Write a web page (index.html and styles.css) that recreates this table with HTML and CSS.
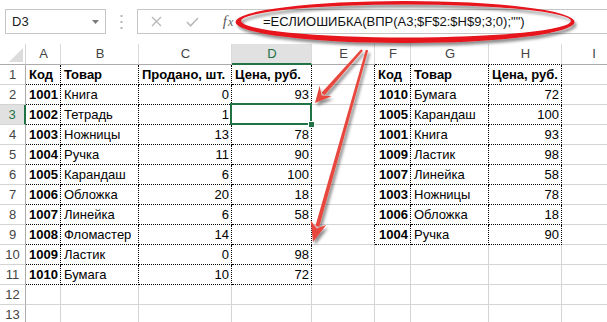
FILE: index.html
```html
<!DOCTYPE html>
<html lang="ru">
<head>
<meta charset="utf-8">
<link rel="stylesheet" href="styles.css">
</head>
<body>
<div class="app">
  <div class="toolbar">
    <div class="namebox"><span>D3</span><svg class="dd" width="7" height="4" viewBox="0 0 7 4"><polygon points="0,0 7,0 3.5,4" fill="#7a7a7a"/></svg></div>
    <div class="dots"><svg width="3" height="14" viewBox="0 0 3 14"><rect x="0.5" y="0" width="2" height="2" fill="#b5b5b5"/><rect x="0.5" y="6" width="2" height="2" fill="#b5b5b5"/><rect x="0.5" y="12" width="2" height="2" fill="#b5b5b5"/></svg></div>
    <div class="fbar">
      <span class="fbtn"><svg width="11" height="11" viewBox="0 0 11 11"><path d="M1 1 L10 10 M10 1 L1 10" stroke="#b9b9b9" stroke-width="1.4" fill="none"/></svg></span>
      <span class="fbtn"><svg width="13" height="10" viewBox="0 0 13 10"><path d="M1 5 L4.5 8.8 L12 1" stroke="#b9b9b9" stroke-width="1.6" fill="none"/></svg></span>
      <span class="fbtn fx"><i>f</i><i class="sx">x</i></span>
      <span class="ftext">=ЕСЛИОШИБКА(ВПР(A3;$F$2:$H$9;3;0);"")</span>
    </div>
  </div>
  <div class="sheet">
    <div class="c corner"><svg width="14" height="14" viewBox="0 0 14 14"><polygon points="14,0 14,14 0,14" fill="#dcdcdc"/></svg></div>
    <div class="c h">A</div><div class="c h">B</div><div class="c h">C</div><div class="c h selcol">D</div><div class="c h">E</div><div class="c h tb">F</div><div class="c h tb">G</div><div class="c h tb">H</div><div class="c h">I</div>

    <div class="c rh">1</div><div class="c t b">Код</div><div class="c t b">Товар</div><div class="c t b">Продано, шт.</div><div class="c t b">Цена, руб.</div><div class="c dr"></div><div class="c t b">Код</div><div class="c t b">Товар</div><div class="c t b">Цена, руб.</div><div class="c"></div>

    <div class="c rh">2</div><div class="c t b n">1001</div><div class="c t">Книга</div><div class="c t n">0</div><div class="c t n">93</div><div class="c dr"></div><div class="c t b n">1010</div><div class="c t">Бумага</div><div class="c t n">72</div><div class="c"></div>

    <div class="c rh selrow">3</div><div class="c t b n">1002</div><div class="c t">Тетрадь</div><div class="c t n">1</div><div class="c t n active"></div><div class="c dr"></div><div class="c t b n">1005</div><div class="c t">Карандаш</div><div class="c t n">100</div><div class="c"></div>

    <div class="c rh">4</div><div class="c t b n">1003</div><div class="c t">Ножницы</div><div class="c t n">13</div><div class="c t n">78</div><div class="c dr"></div><div class="c t b n">1001</div><div class="c t">Книга</div><div class="c t n">93</div><div class="c"></div>

    <div class="c rh">5</div><div class="c t b n">1004</div><div class="c t">Ручка</div><div class="c t n">11</div><div class="c t n">90</div><div class="c dr"></div><div class="c t b n">1009</div><div class="c t">Ластик</div><div class="c t n">98</div><div class="c"></div>

    <div class="c rh">6</div><div class="c t b n">1005</div><div class="c t">Карандаш</div><div class="c t n">6</div><div class="c t n">100</div><div class="c dr"></div><div class="c t b n">1007</div><div class="c t">Линейка</div><div class="c t n">58</div><div class="c"></div>

    <div class="c rh">7</div><div class="c t b n">1006</div><div class="c t">Обложка</div><div class="c t n">20</div><div class="c t n">18</div><div class="c dr"></div><div class="c t b n">1003</div><div class="c t">Ножницы</div><div class="c t n">78</div><div class="c"></div>

    <div class="c rh">8</div><div class="c t b n">1007</div><div class="c t">Линейка</div><div class="c t n">6</div><div class="c t n">58</div><div class="c dr"></div><div class="c t b n">1006</div><div class="c t">Обложка</div><div class="c t n">18</div><div class="c"></div>

    <div class="c rh">9</div><div class="c t b n">1008</div><div class="c t">Фломастер</div><div class="c t n">14</div><div class="c t n"></div><div class="c dr"></div><div class="c t b n">1004</div><div class="c t">Ручка</div><div class="c t n">90</div><div class="c"></div>

    <div class="c rh">10</div><div class="c t b n">1009</div><div class="c t">Ластик</div><div class="c t n">0</div><div class="c t n">98</div><div class="c"></div><div class="c"></div><div class="c"></div><div class="c"></div><div class="c"></div>

    <div class="c rh">11</div><div class="c t b n">1010</div><div class="c t">Бумага</div><div class="c t n">10</div><div class="c t n">72</div><div class="c"></div><div class="c"></div><div class="c"></div><div class="c"></div><div class="c"></div>

    <div class="c rh">12</div><div class="c"></div><div class="c"></div><div class="c"></div><div class="c"></div><div class="c"></div><div class="c"></div><div class="c"></div><div class="c"></div><div class="c"></div>

    <div class="c rh">13</div><div class="c"></div><div class="c"></div><div class="c"></div><div class="c"></div><div class="c"></div><div class="c"></div><div class="c"></div><div class="c"></div><div class="c"></div>
  </div>

  <svg class="overlay" width="607" height="322" viewBox="0 0 607 322">
    <defs>
      <filter id="sh" x="-10%" y="-30%" width="120%" height="170%">
        <feDropShadow dx="2" dy="3" stdDeviation="1.8" flood-color="#000" flood-opacity="0.45"/>
      </filter>
    </defs>
    <g filter="url(#sh)">
      <path fill="#e6121a" fill-rule="evenodd" d="M235.5,22 a169.5,21 0 1,0 339,0 a169.5,21 0 1,0 -339,0 Z M241,21 a165,16.5 0 1,0 330,0 a165,16.5 0 1,0 -330,0 Z"/>
    </g>
    <g filter="url(#sh)" fill="#e8473d">
      <polygon points="362.9,50.8 324.5,95.3 321.5,92.7 361.1,49.2"/>
      <polygon points="315,103 331.6,96.3 321.6,95.5 319.6,85.7"/>
      <polygon points="368.2,50.3 319.2,227.1 315.4,226.1 365.8,49.7"/>
      <polygon points="313,242 326.1,224.9 316.8,228.5 310.7,220.5"/>
    </g>
  </svg>
</div>
</body>
</html>
```

FILE: styles.css
```css
html, body {
  margin: 0;
  padding: 0;
  background: #ffffff;
}

body {
  font-family: "Liberation Sans", Arial, sans-serif;
  font-size: 13px;
  color: #000;
}

.app {
  position: relative;
  width: 607px;
  height: 322px;
  overflow: hidden;
}

.toolbar {
  display: flex;
  align-items: flex-start;
  height: 44px;
  padding-top: 9px;
  box-sizing: border-box;
}

.namebox {
  margin-left: 5px;
  width: 101px;
  height: 25px;
  box-sizing: border-box;
  border: 1px solid #c6c6c6;
  display: flex;
  align-items: center;
  justify-content: space-between;
  padding: 0 6px 0 6px;
  color: #222;
}

.dots {
  width: 31px;
  height: 25px;
  display: flex;
  align-items: center;
  justify-content: center;
}

.fbar {
  flex: 1;
  height: 25px;
  box-sizing: border-box;
  border: 1px solid #c6c6c6;
  border-right: none;
  display: flex;
  align-items: center;
  white-space: nowrap;
}

.fbtn {
  width: 36px;
  display: flex;
  align-items: center;
  justify-content: center;
}

.fx {
  font-family: "Liberation Serif", serif;
  color: #5a5a5a;
  font-size: 15px;
  line-height: 15px;
  align-items: baseline;
}

.fx .sx {
  font-size: 12px;
  margin-left: 1px;
}

.ftext {
  margin-left: 17px;
  color: #111;
}

.sheet {
  display: grid;
  width: 626px;
  grid-template-columns: 26px 35px 78px 93px 80px 63px 36px 78px 73px 64px;
  grid-template-rows: 21px repeat(13, 20px);
}

.c {
  box-sizing: border-box;
  border-right: 1px solid #d4d4d4;
  border-bottom: 1px solid #d4d4d4;
  padding: 0 2px 0 3px;
  line-height: 19px;
  white-space: nowrap;
  overflow: visible;
  position: relative;
}

.corner {
  display: flex;
  align-items: flex-end;
  justify-content: flex-end;
  padding: 0 2px 2px 0;
  border-bottom-color: #ababab;
  border-right-color: #d4d4d4;
}

.h {
  text-align: center;
  color: #444;
  border-bottom-color: #ababab;
  border-right-color: #dadada;
  line-height: 20px;
}

.rh {
  text-align: center;
  color: #444;
  padding: 0;
  border-right-color: #ababab;
}

.selcol {
  background: #e1e1e1;
  color: #217346;
  border-bottom: 2px solid #217346;
}

.selrow {
  background: #e1e1e1;
  color: #217346;
  border-right: 2px solid #217346;
}

.b {
  font-weight: bold;
}

.n {
  text-align: right;
}

.t {
  border-right: 1px dotted #000;
  border-bottom: 1px dotted #000;
}

.dr {
  border-right: 1px dotted #000;
}

.tb {
  border-bottom: 1px dotted #000;
}

.active::after {
  content: "";
  position: absolute;
  left: -2px;
  top: -2px;
  right: -1px;
  bottom: -1px;
  border: 2px solid #217346;
}

.active::before {
  content: "";
  position: absolute;
  right: -4px;
  bottom: -4px;
  width: 5px;
  height: 5px;
  background: #217346;
  border: 1px solid #fff;
  z-index: 2;
}

.overlay {
  position: absolute;
  left: 0;
  top: 0;
  pointer-events: none;
}
```
